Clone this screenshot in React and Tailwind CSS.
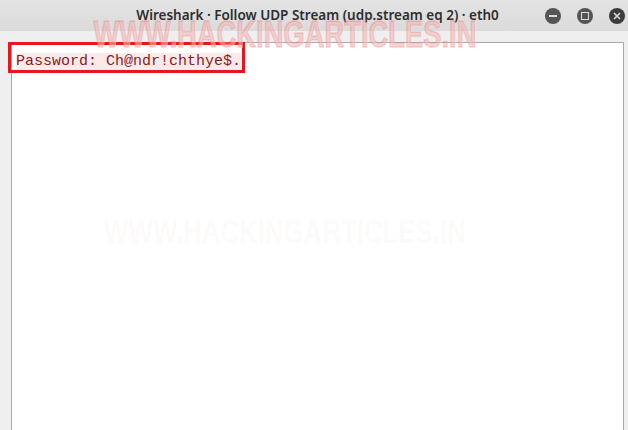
export default function App() {
  return (
    <div className="relative h-[430px] w-[628px] overflow-hidden bg-[#efefef]">
      {/* title bar */}
      <div className="flex h-[31px] items-center bg-gradient-to-b from-[#e3e3e3] to-[#dbdbdb]">
        <div className="w-[83px]" />
        <div className="flex-1 pl-[7px] text-center font-['Noto_Sans',sans-serif] text-[13.5px] font-semibold text-[#2e2e2e]">
          Wireshark · Follow UDP Stream (udp.stream eq 2) · eth0
        </div>
        <div className="flex w-[83px] items-center gap-[16px]">
          <span className="flex h-[16px] w-[16px] items-center justify-center rounded-full bg-[#555555]">
            <span className="h-[2px] w-[8px] bg-[#dcdcdc]" />
          </span>
          <span className="flex h-[16px] w-[16px] items-center justify-center rounded-full bg-[#555555]">
            <span className="h-[8px] w-[8px] border-[1.5px] border-[#dcdcdc]" />
          </span>
          <span className="flex h-[16px] w-[16px] items-center justify-center rounded-full bg-[#3d3d3d]">
            <svg width="8" height="8" viewBox="0 0 8 8">
              <path d="M1 1L7 7M7 1L1 7" stroke="#dcdcdc" strokeWidth="1.6" />
            </svg>
          </span>
        </div>
      </div>

      {/* stream text area */}
      <div className="pl-[11px] pr-[4px] pt-[11px]">
        <div className="h-[400px] border border-[#a9a9a9] bg-white pl-[4px] pt-[4px]">
          <span className="bg-[#fbeaea] font-['Liberation_Mono',monospace] text-[15px] leading-[17px] text-[#8b1a1a]">
            Password: Ch@ndr!chthye$.
          </span>
        </div>
      </div>

      {/* red highlight box */}
      <div className="absolute left-[8px] top-[42px] h-[31px] w-[237px] border-[3px] border-[#e5161d]" />

      {/* watermarks */}
      <div className="pointer-events-none absolute left-[60px] top-[17px] flex w-[450px] justify-center">
        <span className="inline-block whitespace-nowrap font-['Liberation_Sans',sans-serif] text-[36px] font-bold leading-[36px] text-[rgba(226,90,90,0.26)] [-webkit-text-stroke:1.5px_rgba(235,140,140,0.35)] [text-shadow:1px_1px_0_rgba(255,255,255,0.45)] [transform:scaleX(0.76)]">
          WWW.HACKINGARTICLES.IN
        </span>
      </div>
      <div className="pointer-events-none absolute left-[60px] top-[214px] flex w-[450px] justify-center">
        <span className="inline-block whitespace-nowrap font-['Liberation_Sans',sans-serif] text-[34px] font-bold leading-[34px] text-[rgba(200,120,120,0.04)] [transform:scaleX(0.76)]">
          WWW.HACKINGARTICLES.IN
        </span>
      </div>
    </div>
  );
}
